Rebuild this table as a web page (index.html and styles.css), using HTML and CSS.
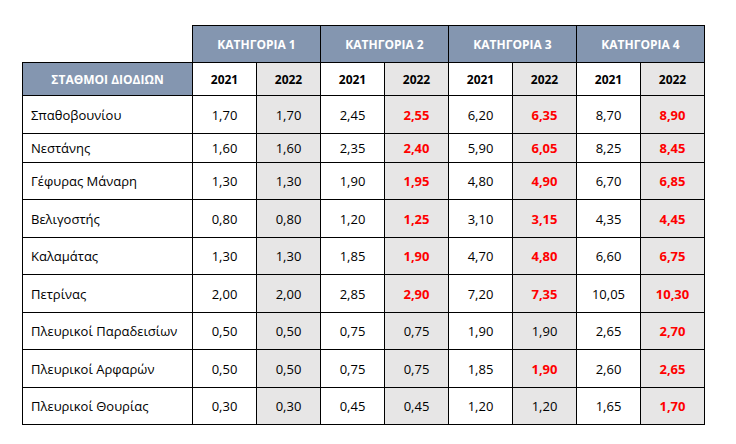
FILE: index.html
```html
<!DOCTYPE html>
<html lang="el">
<head>
<meta charset="utf-8">
<link rel="stylesheet" href="styles.css">
</head>
<body>
<table class="tolls">
  <colgroup>
    <col class="c-name">
    <col class="c-num"><col class="c-num"><col class="c-num"><col class="c-num">
    <col class="c-num"><col class="c-num"><col class="c-num"><col class="c-num">
  </colgroup>
  <tr class="r-cat">
    <td class="blank"></td>
    <th class="head" colspan="2">ΚΑΤΗΓΟΡΙΑ 1</th>
    <th class="head" colspan="2">ΚΑΤΗΓΟΡΙΑ 2</th>
    <th class="head" colspan="2">ΚΑΤΗΓΟΡΙΑ 3</th>
    <th class="head" colspan="2">ΚΑΤΗΓΟΡΙΑ 4</th>
  </tr>
  <tr class="r-year">
    <th class="head">ΣΤΑΘΜΟΙ ΔΙΟΔΙΩΝ</th>
    <th class="yr">2021</th><th class="yr g">2022</th>
    <th class="yr">2021</th><th class="yr g">2022</th>
    <th class="yr">2021</th><th class="yr g">2022</th>
    <th class="yr">2021</th><th class="yr g">2022</th>
  </tr>
  <tr class="r-tall">
    <td class="name">Σπαθοβουνίου</td>
    <td>1,70</td><td class="g">1,70</td>
    <td>2,45</td><td class="g up">2,55</td>
    <td>6,20</td><td class="g up">6,35</td>
    <td>8,70</td><td class="g up">8,90</td>
  </tr>
  <tr class="r-short">
    <td class="name">Νεστάνης</td>
    <td>1,60</td><td class="g">1,60</td>
    <td>2,35</td><td class="g up">2,40</td>
    <td>5,90</td><td class="g up">6,05</td>
    <td>8,25</td><td class="g up">8,45</td>
  </tr>
  <tr class="r-mid">
    <td class="name">Γέφυρας Μάναρη</td>
    <td>1,30</td><td class="g">1,30</td>
    <td>1,90</td><td class="g up">1,95</td>
    <td>4,80</td><td class="g up">4,90</td>
    <td>6,70</td><td class="g up">6,85</td>
  </tr>
  <tr class="r-tall">
    <td class="name">Βελιγοστής</td>
    <td>0,80</td><td class="g">0,80</td>
    <td>1,20</td><td class="g up">1,25</td>
    <td>3,10</td><td class="g up">3,15</td>
    <td>4,35</td><td class="g up">4,45</td>
  </tr>
  <tr class="r-mid">
    <td class="name">Καλαμάτας</td>
    <td>1,30</td><td class="g">1,30</td>
    <td>1,85</td><td class="g up">1,90</td>
    <td>4,70</td><td class="g up">4,80</td>
    <td>6,60</td><td class="g up">6,75</td>
  </tr>
  <tr class="r-tall">
    <td class="name">Πετρίνας</td>
    <td>2,00</td><td class="g">2,00</td>
    <td>2,85</td><td class="g up">2,90</td>
    <td>7,20</td><td class="g up">7,35</td>
    <td>10,05</td><td class="g up">10,30</td>
  </tr>
  <tr class="r-mid">
    <td class="name">Πλευρικοί Παραδεισίων</td>
    <td>0,50</td><td class="g">0,50</td>
    <td>0,75</td><td class="g">0,75</td>
    <td>1,90</td><td class="g">1,90</td>
    <td>2,65</td><td class="g up">2,70</td>
  </tr>
  <tr class="r-tall">
    <td class="name">Πλευρικοί Αρφαρών</td>
    <td>0,50</td><td class="g">0,50</td>
    <td>0,75</td><td class="g">0,75</td>
    <td>1,85</td><td class="g up">1,90</td>
    <td>2,60</td><td class="g up">2,65</td>
  </tr>
  <tr class="r-mid">
    <td class="name">Πλευρικοί Θουρίας</td>
    <td>0,30</td><td class="g">0,30</td>
    <td>0,45</td><td class="g">0,45</td>
    <td>1,20</td><td class="g">1,20</td>
    <td>1,65</td><td class="g up">1,70</td>
  </tr>
</table>
</body>
</html>
```
FILE: styles.css
```css
html, body {
  margin: 0;
  padding: 0;
  background: #ffffff;
}

body {
  padding: 25px 0 0 22px;
  font-family: "Open Sans", "Noto Sans", "DejaVu Sans", sans-serif;
  font-size: 13px;
  color: #000000;
}

.tolls {
  border-collapse: collapse;
  table-layout: fixed;
  width: 683px;
}

.c-name { width: 170px; }
.c-num { width: 64px; }

.tolls td,
.tolls th {
  border: 1px solid #000000;
  padding: 0;
  text-align: center;
  vertical-align: middle;
  font-weight: normal;
  white-space: nowrap;
}

.tolls td.blank {
  border: none;
  background: #ffffff;
}

.tolls th.head {
  background: #8496b0;
  color: #ffffff;
  font-weight: bold;
  font-size: 12px;
}

.tolls th.yr {
  font-weight: bold;
  font-size: 12px;
}

.tolls .g {
  background: #e7e6e6;
}

.tolls td.up {
  color: #ff0000;
  font-weight: bold;
}

.tolls td.name {
  text-align: left;
  padding-left: 8px;
}

.r-cat { height: 37px; }
.r-year { height: 33px; }
.r-tall { height: 38px; }
.r-mid { height: 37px; }
.r-short { height: 29px; }
```
